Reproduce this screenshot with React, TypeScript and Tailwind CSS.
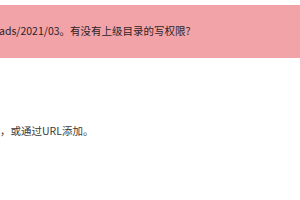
export default function App() {
  return (
    <div
      className="w-[300px] h-[200px] bg-white overflow-hidden pt-[5px]"
      style={{ fontFamily: '"Noto Sans CJK SC", "Noto Sans", sans-serif' }}
    >
      <div className="h-[53px] bg-[#f2a3a8] flex items-center">
        <p className="ml-[-1px] text-[10.5px] leading-none text-[#2e2426] whitespace-nowrap">
          ads/2021/03。有没有上级目录的写权限?
        </p>
      </div>
      <p className="mt-[68px] ml-[0px] text-[10.5px] leading-none text-[#3a3a3a] whitespace-nowrap">
        ，或通过URL添加。
      </p>
    </div>
  );
}
